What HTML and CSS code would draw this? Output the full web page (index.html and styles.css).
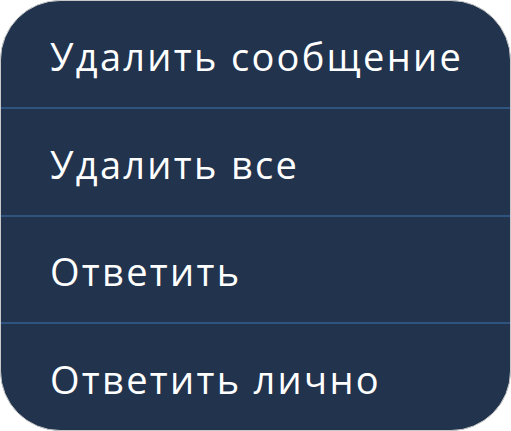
FILE: index.html
```html
<!DOCTYPE html>
<html lang="ru">
<head>
<meta charset="utf-8">
<link rel="stylesheet" href="styles.css">
</head>
<body>
<div class="menu">
  <div class="item">Удалить сообщение</div>
  <div class="item">Удалить все</div>
  <div class="item">Ответить</div>
  <div class="item">Ответить лично</div>
</div>
</body>
</html>
```
FILE: styles.css
```css
html, body {
  margin: 0;
  padding: 0;
  background: #ffffff;
}
.menu {
  box-sizing: border-box;
  width: 511px;
  height: 431px;
  background: #21334d;
  border: 1px solid #c8c8c8;
  border-radius: 60px;
  overflow: hidden;
  display: flex;
  flex-direction: column;
  font-family: "Open Sans", sans-serif;
}
.item {
  flex: 1;
  display: flex;
  align-items: center;
  padding-left: 49px;
  padding-top: 4px;
  color: #ffffff;
  font-size: 38px;
  letter-spacing: 2.3px;
  border-bottom: 2px solid #2f5480;
}
.item:last-child {
  border-bottom: none;
}
```
